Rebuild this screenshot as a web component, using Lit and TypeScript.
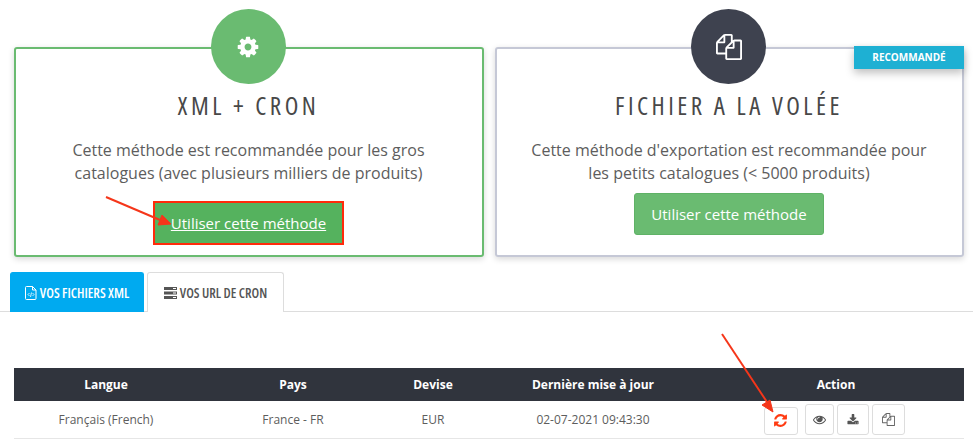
import { LitElement, html, css, svg } from "lit";
import { customElement } from "lit/decorators.js";

const P = {
  cog: "M1152 896q0-106-75-181t-181-75-181 75-75 181 75 181 181 75 181-75 75-181zm512-109v222q0 12-8 23t-20 13l-185 28q-19 54-39 91 35 50 107 138 10 12 10 25t-9 23q-27 37-99 108t-94 71q-12 0-26-9l-138-108q-44 23-91 38-16 136-29 186-7 28-36 28h-222q-14 0-24.500-8.500t-11.500-21.500l-28-184q-49-16-90-37l-141 107q-10 9-25 9-14 0-25-11-126-114-165-168-7-10-7-23 0-12 8-23 15-21 51-66.500t54-70.500q-27-50-41-99l-183-27q-13-2-21-12.500t-8-23.500v-222q0-12 8-23t19-13l186-28q14-46 39-92-40-57-107-138-10-12-10-24 0-10 9-23 26-36 98.500-107.500t94.500-71.500q13 0 26 10l138 107q44-23 91-38 16-136 29-186 7-28 36-28h222q14 0 24.500 8.500t11.500 21.500l28 184q49 16 90 37l142-107q9-9 24-9 13 0 25 10 129 119 165 170 7 8 7 22 0 12-8 23-15 21-51 66.500t-54 70.500q26 50 41 98l183 28q13 2 21 12.500t8 23.500z",
  files: "M1696 384q40 0 68 28t28 68v1216q0 40-28 68t-68 28h-960q-40 0-68-28t-28-68v-288h-544q-40 0-68-28t-28-68v-672q0-40 20-88t48-76l408-408q28-28 76-48t88-20h416q40 0 68 28t28 68v328q68-40 128-40h416zm-544 213l-299 299h299v-299zm-640-384l-299 299h299v-299zm196 647l316-316v-416h-384v416q0 40-28 68t-68 28h-416v640h512v-256q0-40 20-88t48-76zm956 804v-1152h-384v416q0 40-28 68t-68 28h-416v640h896z",
  refresh: "M1639 1056q0 5-1 7-64 268-268 434.500t-478 166.500q-146 0-282.500-55t-243.500-157l-129 129q-19 19-45 19t-45-19-19-45v-448q0-26 19-45t45-19h448q26 0 45 19t19 45-19 45l-137 137q71 66 161 102t187 36q134 0 250-65t186-179q11-17 53-117 8-23 30-23h192q13 0 22.500 9.500t9.500 22.500zm25-800v448q0 26-19 45t-45 19h-448q-26 0-45-19t-19-45 19-45l138-138q-148-137-349-137-134 0-250 65t-186 179q-11 17-53 117-8 23-30 23h-199q-13 0-22.500-9.500t-9.500-22.500v-7q65-268 270-434.500t480-166.500q146 0 284 55.500t245 156.500l130-129q19-19 45-19t45 19 19 45z",
  eye: "M1664 960q-152-236-381-353 61 104 61 225 0 185-131.500 316.500t-316.500 131.500-316.500-131.500-131.500-316.500q0-121 61-225-229 117-381 353 133 205 333.500 326.500t434.500 121.500 434.500-121.500 333.500-326.500zm-720-384q0-20-14-34t-34-14q-125 0-214.500 89.500t-89.500 214.500q0 20 14 34t34 14 34-14 14-34q0-86 61-147t147-61q20 0 34-14t14-34zm848 384q0 34-20 69-140 230-376.500 368.500t-499.500 138.500-499.500-139-376.500-368q-20-35-20-69t20-69q140-229 376.500-368t499.500-139 499.500 139 376.500 368q20 35 20 69z",
  download: "M1344 1344q0-26-19-45t-45-19-45 19-19 45 19 45 45 19 45-19 19-45zm256 0q0-26-19-45t-45-19-45 19-19 45 19 45 45 19 45-19 19-45zm128-224v320q0 40-28 68t-68 28h-1472q-40 0-68-28t-28-68v-320q0-40 28-68t68-28h465l135 136q58 56 136 56t136-56l136-136h464q40 0 68 28t28 68zm-325-569q17 41-14 70l-448 448q-18 19-45 19t-45-19l-448-448q-31-29-14-70 17-39 59-39h256v-448q0-26 19-45t45-19h256q26 0 45 19t19 45v448h256q42 0 59 39z",
};

const fa = (d: string, size: number, color: string) => html`<svg width=${size} height=${size} viewBox="0 0 1792 1792" fill=${color} aria-hidden="true">${svg`<path d=${d}></path>`}</svg>`;

const fileCode = html`<svg width="12" height="14" viewBox="0 0 12 14" fill="none" stroke="#fff" stroke-width="1" aria-hidden="true"><path d="M1.500.5h6l3.500 3.500v8.500a1 1 0 0 1-1 1h-8.500a1 1 0 0 1-1-1v-11a1 1 0 0 1 1-1zM7.500.5v3.500h3.500"/><path d="M4.500 7l-1.500 1.500 1.500 1.500M7.500 7l1.500 1.500-1.500 1.500M6.500 6.500l-1 4.500" stroke-width=".8"/></svg>`;

const server = html`<svg width="13" height="12" viewBox="0 0 13 12" fill="#555" aria-hidden="true"><path d="M0 0h13v3h-13zM0 4.500h13v3h-13zM0 9h13v3h-13z"/><path d="M9 1h3v1h-3zM9 5.500h3v1h-3zM9 10h3v1h-3z" fill="#fff"/></svg>`;

@customElement("app-root")
export class AppRoot extends LitElement {
  static styles = css`
    :host {
      display: block;
      position: relative;
      width: 973px;
      height: 442px;
      overflow: hidden;
      background: #fff;
      font-family: "Open Sans", sans-serif;
      color: #5d5d5d;
    }
    .cards {
      display: flex;
      gap: 11px;
      padding: 47px 9px 0 14px;
    }
    .card {
      position: relative;
      box-sizing: border-box;
      flex: 0 0 470px;
      height: 210px;
      border: 2px solid #6abb71;
      border-radius: 3px;
      box-shadow: 0 2px 6px rgba(0, 0, 0, 0.16);
      display: flex;
      flex-direction: column;
      align-items: center;
      padding: 42px 1px 0 0;
      text-align: center;
    }
    .card.dark {
      flex-basis: 469px;
      border-color: #c5c8d6;
    }
    .circle {
      position: absolute;
      top: -40px;
      left: 50%;
      width: 75px;
      height: 75px;
      margin-left: -38.500px;
      border-radius: 50%;
      background: #6abb71;
      display: flex;
      align-items: center;
      justify-content: center;
    }
    .dark .circle {
      background: #3e424f;
    }
    .badge {
      position: absolute;
      top: -3px;
      right: -2px;
      width: 110px;
      height: 23px;
      background: #1eb0d3;
      color: #fff;
      font-size: 10px;
      font-weight: 700;
      line-height: 23px;
      box-shadow: 0 4px 8px rgba(0, 0, 0, 0.25);
    }
    h2 {
      margin: 0;
      font-family: "Open Sans", sans-serif;
      font-stretch: 75%;
      font-weight: 400;
      font-size: 25px;
      line-height: 28px;
      letter-spacing: 3.500px;
      color: #484848;
    }
    p {
      margin: 20px 0 0;
      font-size: 16px;
      line-height: 23px;
    }
    .btn {
      box-sizing: border-box;
      width: 190px;
      height: 42px;
      margin-top: 8px;
      border: 1px solid #5fb266;
      border-radius: 3px;
      background: #6abb71;
      color: #fff;
      font-size: 15px;
      line-height: 40px;
    }
    .btn.active {
      width: 191px;
      height: 44px;
      margin-top: 16px;
      border: 2px solid #ff2a0a;
      border-radius: 0;
      background: #55b25e;
      text-decoration: underline;
    }
    .tabs {
      display: flex;
      gap: 3px;
      margin-top: 15px;
      padding-left: 10px;
      height: 39px;
      border-bottom: 1px solid #ddd;
    }
    .tab {
      box-sizing: border-box;
      height: 40px;
      display: flex;
      align-items: center;
      justify-content: center;
      gap: 3px;
      white-space: nowrap;
      font-family: "Open Sans", sans-serif;
      font-stretch: 75%;
      font-size: 13.500px;
      font-weight: 600;
      color: #555;
      border: 1px solid #ddd;
      border-bottom: none;
      border-radius: 3px 3px 0 0;
    }
    .tab.on {
      width: 134px;
      background: #00aaf0;
      border-color: #00aaf0;
      color: #fff;
    }
    .tab.off {
      width: 137px;
      background: #fff;
    }
    table {
      border-collapse: collapse;
      table-layout: fixed;
      width: 950px;
      margin: 56px 0 0 14px;
      font-size: 12px;
      text-align: center;
    }
    th {
      height: 33px;
      padding: 0;
      background: #30343d;
      color: #fff;
      font-weight: 700;
      font-size: 12px;
    }
    td {
      height: 37px;
      padding: 0;
      border-bottom: 1px solid #e6e6e6;
    }
    .actions {
      display: flex;
      justify-content: center;
      align-items: center;
      gap: 3px;
      padding-right: 4px;
    }
    .ico {
      box-sizing: border-box;
      height: 31px;
      display: flex;
      align-items: center;
      justify-content: center;
      border: 1px solid #ddd;
      border-radius: 3px;
      background: #fff;
    }
    .ico.first {
      height: 28px;
      margin-right: 4px;
      margin-top: 2px;
    }
    .arrows {
      position: absolute;
      inset: 0;
      pointer-events: none;
    }
  `;

  render() {
    return html`
      <div class="cards">
        <section class="card">
          <div class="circle">${fa(P.cog, 24, "#fff")}</div>
          <h2>XML + CRON</h2>
          <p>Cette méthode est recommandée pour les gros<br />catalogues (avec plusieurs milliers de produits)</p>
          <div class="btn active">Utiliser cette méthode</div>
        </section>
        <section class="card dark">
          <div class="circle">${fa(P.files, 26, "#fff")}</div>
          <div class="badge">RECOMMANDÉ</div>
          <h2>FICHIER A LA VOLÉE</h2>
          <p>Cette méthode d'exportation est recommandée pour<br />les petits catalogues (&lt; 5000 produits)</p>
          <div class="btn">Utiliser cette méthode</div>
        </section>
      </div>
      <div class="tabs">
        <div class="tab on">${fileCode}<span>VOS FICHIERS XML</span></div>
        <div class="tab off">${server}<span>VOS URL DE CRON</span></div>
      </div>
      <table>
        <colgroup>
          <col style="width:184px" /><col style="width:190px" /><col style="width:90px" /><col style="width:230px" /><col style="width:256px" />
        </colgroup>
        <thead>
          <tr><th>Langue</th><th>Pays</th><th>Devise</th><th>Dernière mise à jour</th><th>Action</th></tr>
        </thead>
        <tbody>
          <tr>
            <td>Français (French)</td>
            <td>France - FR</td>
            <td>EUR</td>
            <td>02-07-2021 09:43:30</td>
            <td>
              <div class="actions">
                <span class="ico first" style="width:34px">${fa(P.refresh, 15, "#ff3b12")}</span>
                <span class="ico" style="width:29px">${fa(P.eye, 13, "#555")}</span>
                <span class="ico" style="width:32px">${fa(P.download, 12, "#555")}</span>
                <span class="ico" style="width:33px">${fa(P.files, 13, "#666")}</span>
              </div>
            </td>
          </tr>
        </tbody>
      </table>
      <svg class="arrows" width="973" height="442" viewBox="0 0 973 442" aria-hidden="true">
        <g stroke="#f5361a" stroke-width="2" fill="#f5361a">
          <path d="M106 197L160 220" fill="none" />
          <path d="M171 224L158 225L162 215Z" stroke-width="1" />
          <path d="M722 334L767 402" fill="none" />
          <path d="M773 412L762 405L770 400Z" stroke-width="1" />
        </g>
      </svg>
    `;
  }
}
